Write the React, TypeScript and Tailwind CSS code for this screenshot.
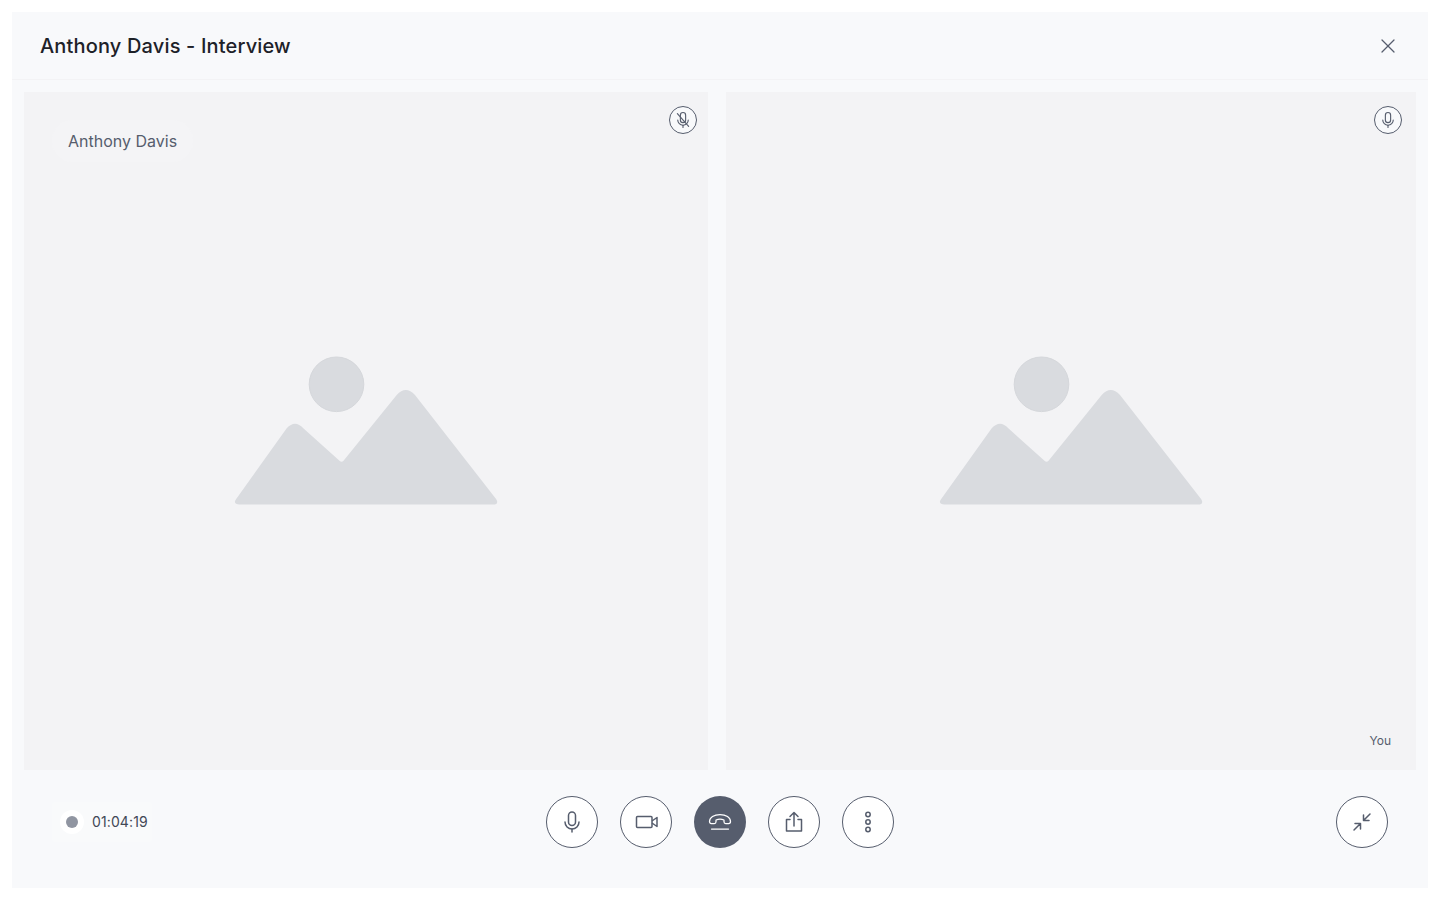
import { X } from 'lucide-react';
import type { ReactNode } from 'react';

function MicIcon({ size, muted }: { size: number; muted?: boolean }) {
  return (
    <svg width={size} height={size} viewBox="0 0 24 24" fill="none" stroke="#565d6d" strokeWidth="1.5" strokeLinecap="round" strokeLinejoin="round">
      <rect x="8.500" y="2" width="7" height="13.500" rx="3.500" />
      <path d="M5 12a7 7 0 0 0 14 0" />
      <path d="M12 19v3" />
      {muted && <path d="M4.500 3.500l15 17" />}
    </svg>
  );
}

function PlaceholderImage() {
  return (
    <svg width="264" height="150" viewBox="0 0 264 150" className="block">
      <circle cx="102.500" cy="28.300" r="27.300" fill="#d9dbdf" stroke="#d5d7db" strokeWidth="1" />
      <path
        d="M5.500 148.600C1.500 148.600 -0.500 146.500 2 143.200L52.700 72.300Q61 63 69.300 72.300L105.500 104.800Q107.700 106.800 109.500 104.800L162.700 39Q171.700 29 181 39L261.700 142.500C264.700 146.500 263 148.600 259 148.600Z"
        fill="#d9dbdf"
      />
    </svg>
  );
}

function Tile({ className, children }: { className: string; children: ReactNode }) {
  return (
    <div className={`relative flex h-[678px] items-center justify-center bg-[#f3f3f5] ${className}`}>
      <PlaceholderImage />
      {children}
    </div>
  );
}

function MicBadge({ muted, className }: { muted?: boolean; className: string }) {
  return (
    <div className={`absolute top-[14px] flex h-[28px] w-[28px] items-center justify-center rounded-full border border-[#565d6d] bg-[#f8f9fb] ${className}`}>
      <MicIcon size={18} muted={muted} />
    </div>
  );
}

function RoundButton({ children, dark }: { children: ReactNode; dark?: boolean }) {
  return (
    <button
      className={
        dark
          ? 'flex h-[52px] w-[52px] items-center justify-center rounded-full bg-[#565d6d]'
          : 'flex h-[52px] w-[52px] items-center justify-center rounded-full border border-[#565d6d] bg-white'
      }
    >
      {children}
    </button>
  );
}

export default function App() {
  return (
    <div className="h-[900px] w-[1440px] bg-white p-[12px] font-['Inter',sans-serif]">
      <div className="flex h-[876px] flex-col bg-[#f8f9fb]">
        {/* Header */}
        <div className="flex h-[68px] shrink-0 items-center justify-between border-b border-[#f3f3f5] px-[28px]">
          <h1 className="text-[20px] font-medium tracking-[0.16px] text-[#1d2128]">Anthony Davis - Interview</h1>
          <X size={24} strokeWidth={1.25} color="#565d6d" />
        </div>

        {/* Video tiles */}
        <div className="mt-[12px] flex gap-[18px] px-[12px]">
          <Tile className="w-[684px]">
            <div className="absolute left-[28px] top-[28px] flex h-[42px] items-center rounded-[20px] bg-[#f4f4f6] px-[16px] text-[16px] leading-[24px] text-[#565d6d]">
              Anthony Davis
            </div>
            <MicBadge muted className="right-[11px]" />
          </Tile>
          <Tile className="w-[690px]">
            <MicBadge className="right-[14px]" />
            <div className="absolute bottom-[21px] right-[25px] text-[12px] leading-[16px] text-[#565d6d]">You</div>
          </Tile>
        </div>

        {/* Call controls */}
        <div className="grid grid-cols-[1fr_auto_1fr] items-center px-[40px] pt-[26px]">
          <div className="flex h-[40px] w-[100px] items-center rounded-[4px] bg-[#f9fafb] pl-[8px]">
            <div className="flex h-[24px] w-[24px] items-center justify-center rounded-full bg-white">
              <div className="h-[12px] w-[12px] rounded-full bg-[#9095a1]" />
            </div>
            <span className="mb-[1px] ml-[8px] text-[14px] leading-[20px] tracking-[0.12px] text-[#424856]">01:04:19</span>
          </div>

          <div className="flex gap-[22px]">
            <RoundButton>
              <MicIcon size={24} />
            </RoundButton>
            <RoundButton>
              <svg width="24" height="24" viewBox="0 0 24 24" fill="none" stroke="#565d6d" strokeWidth="1.500" strokeLinejoin="round">
                <rect x="2.500" y="6.500" width="15.500" height="11" rx="1" />
                <path d="M18 11l5-3.500v9l-5-3.500" />
              </svg>
            </RoundButton>
            <RoundButton dark>
              <svg width="24" height="24" viewBox="0 0 24 24" fill="none" stroke="#fff" strokeWidth="1.250" strokeLinecap="round" strokeLinejoin="round">
                <path d="M1.500 11.500c0-4 4.500-7 10.500-7s10.500 3 10.500 7c0 1.200-.8 2-1.800 2h-3c-1 0-1.700-.8-1.700-1.800v-1.700c-2.500-1-5.500-1-8 0v1.700c0 1-.7 1.800-1.700 1.800h-3c-1 0-1.800-.8-1.800-2z" />
                <path d="M3.500 19h17" />
              </svg>
            </RoundButton>
            <RoundButton>
              <svg width="24" height="24" viewBox="0 0 24 24" fill="none" stroke="#565d6d" strokeWidth="1.500" strokeLinecap="round" strokeLinejoin="round">
                <path d="M8 9.500H4.500v11.500h15V9.500H16" />
                <path d="M12 16V2.500M8 6.500l4-4 4 4" />
              </svg>
            </RoundButton>
            <RoundButton>
              <svg width="24" height="24" viewBox="0 0 24 24" fill="none" stroke="#565d6d" strokeWidth="1.500">
                <circle cx="12" cy="4.500" r="2.200" />
                <circle cx="12" cy="12" r="2.200" />
                <circle cx="12" cy="19.500" r="2.200" />
              </svg>
            </RoundButton>
          </div>

          <div className="flex justify-end">
            <RoundButton>
              <svg width="24" height="24" viewBox="0 0 24 24" fill="none" stroke="#565d6d" strokeWidth="1.500" strokeLinecap="round" strokeLinejoin="round">
                <path d="M20 4l-6.500 6.500M13.500 5v5.500H19" />
                <path d="M4 20l6.500-6.500M5 13.500h5.500V19" />
              </svg>
            </RoundButton>
          </div>
        </div>
      </div>
    </div>
  );
}
